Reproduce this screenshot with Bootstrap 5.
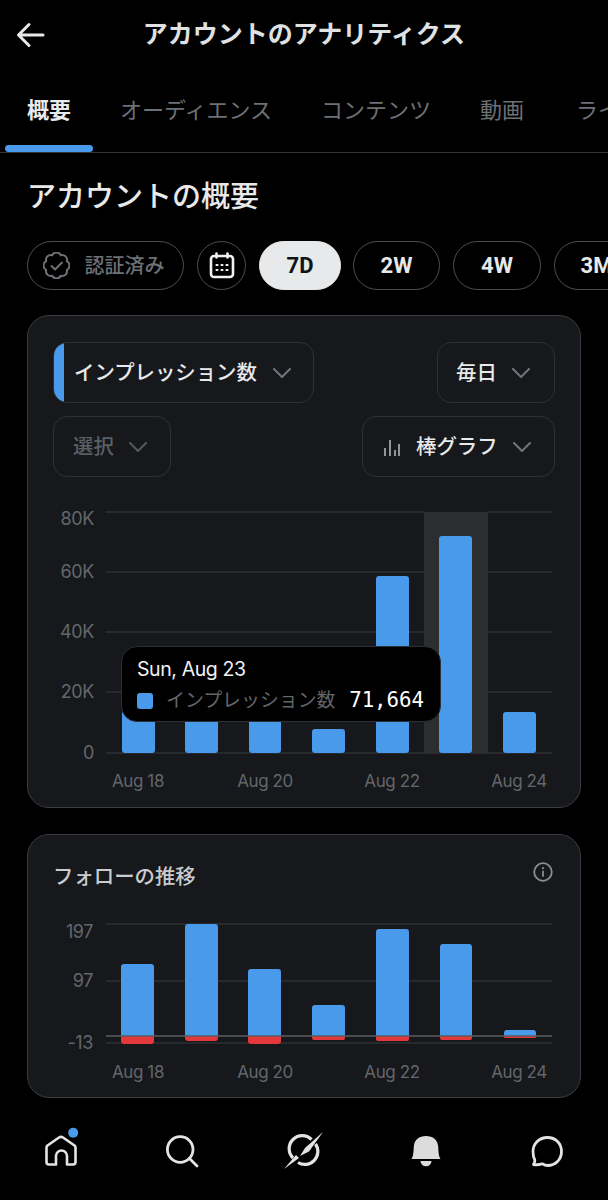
<!DOCTYPE html>
<html lang="ja">
<head>
  <meta charset="UTF-8">
  <title>アカウントのアナリティクス</title>
  <meta name="viewport" content="width=device-width, initial-scale=1.0">
  <link href="https://cdn.jsdelivr.net/npm/bootstrap@5.3.3/dist/css/bootstrap.min.css" rel="stylesheet" />
  <style>
    body { background: #000; color: #e7e9ea; height: 1200px; overflow: hidden; font-family: "Roboto", "Noto Sans CJK JP", sans-serif; }
    .top-bar { height: 68px; padding-top: 2px; display: grid; grid-template-columns: 1fr auto 1fr; align-items: center; }
    .top-bar svg { margin-left: 15px; }
    .top-title { font-size: 25px; font-weight: 700; color: #dfe1e3; }
    .tab-row { height: 85px; padding-left: 5px; gap: 5px; border-bottom: 1px solid #35373a; overflow: hidden; flex-wrap: nowrap; }
    .tab-item { position: relative; padding: 0 22px; font-size: 22px; color: #6d7175; white-space: nowrap; display: flex; align-items: center; height: 84px; }
    .tab-item.on { color: #e7e9ea; font-weight: 700; }
    .tab-item.on::after { content: ""; position: absolute; left: 0; right: 0; bottom: 0; height: 7px; border-radius: 4px; background: #4a9aeb; }
    .tab-item.last { margin-left: 3px; }
    .page-head { font-size: 29px; line-height: 40px; font-weight: 500; margin: 24px 0 0 27px; color: #e7e9ea; }
    .chip-row { margin: 24px 0 0 27px; gap: 13px; width: 640px; }
    .chip { height: 49px; border: 1.5px solid #4c4f53; color: #e7e9ea; font-size: 22px; font-weight: 700; padding: 0; display: flex; align-items: center; justify-content: center; flex: none; }
    .chip.verified { width: 157px; color: #6d7175; gap: 15px; font-size: 20px; font-weight: 500; padding-right: 4px; }
    .chip.cal { width: 49px; }
    .chip.d7 { width: 82px; background: #e7e9ea; border-color: #e7e9ea; color: #0f1419; }
    .chip.w2 { width: 87px; margin-left: -1px; }
    .chip.w4 { width: 88px; }
    .chip.m3 { width: 85px; }
    .panel { background: #16181c; border: 1.5px solid #3a3c41; border-radius: 22px; margin: 0 27px; position: relative; }
    .panel-main { margin-top: 25px; height: 493px; padding: 25.5px 25px 0; }
    .panel-follow { margin-top: 26px; height: 264px; padding: 27px 25px 0; }
    .pick { height: 61px; border: 1.5px solid #2e3035; border-radius: 14px; background: transparent; color: #e7e9ea; font-size: 20.4px; font-weight: 500; display: flex; align-items: center; padding: 2px 0 0; position: relative; overflow: hidden; }
    .pick-row2 { margin-top: 13px; }
    .pick.metric { width: 261px; padding-left: 20px; }
    .pick.metric::before { content: ""; position: absolute; left: 0; top: 0; bottom: 0; width: 10px; background: #4a9aeb; }
    .pick.daily { width: 118px; padding-left: 18px; }
    .pick.choose { width: 118px; padding-left: 19px; color: #5c5f64; }
    .pick.kind { width: 193px; padding-left: 21px; }
    .pick .chev { margin-left: 15px; }
    .pick.metric .chev { margin-left: 16px; }
    .plot { display: block; }
    .plot-main { margin-top: 23px; }
    .plot-follow { margin-top: 7.5px; }
    .plot text { font-size: 17px; fill: #63666b; font-family: "Inter", "Roboto", sans-serif; letter-spacing: -0.4px; }
    .plot .axis-y { font-size: 18px; text-anchor: end; }
    .plot .axis-x { text-anchor: middle; }
    .hover-tip { position: absolute; left: 93px; top: 330px; width: 320px; height: 76px; background: #000; border: 1.5px solid #2c2e32; border-radius: 16px; padding: 9px 16px 0 15px; }
    .tip-date { font-size: 19.5px; line-height: 26px; color: #f1f2f3; font-family: "Inter", "Roboto", sans-serif; letter-spacing: -0.4px; }
    .tip-line { margin-top: 6px; height: 26px; white-space: nowrap; }
    .tip-swatch { width: 16px; height: 16px; border-radius: 3px; background: #4a9aeb; flex: none; }
    .tip-name { font-size: 18.9px; color: #63666b; margin-left: 13px; }
    .tip-val { font-size: 20.8px; color: #fff; margin-left: auto; font-family: "DejaVu Sans Mono", "Liberation Mono", monospace; letter-spacing: -0.05px; }
    .panel-title { font-size: 20.4px; line-height: 30px; color: #c9cbce; height: 30px; font-weight: 500; }
    .info-mark { margin-right: 2px; }
    .bottom-nav { height: 102px; padding-top: 33px; }
    .bottom-nav .nav-cell { flex: 1 1 0; display: flex; justify-content: center; }
    .bottom-nav svg { overflow: visible; }
  </style>
</head>
<body>
  <div class="top-bar">
    <svg width="32" height="32" viewBox="0 0 32 32" fill="none" stroke="#e7e9ea" stroke-width="3" stroke-linecap="round" stroke-linejoin="round"><path d="M4 16h24M14 5.500 3.500 16 14 26.500"/></svg>
    <div class="top-title">アカウントのアナリティクス</div>
    <div></div>
  </div>

  <div class="nav tab-row">
    <div class="tab-item on">概要</div>
    <div class="tab-item">オーディエンス</div>
    <div class="tab-item">コンテンツ</div>
    <div class="tab-item">動画</div>
    <div class="tab-item last">ライブ</div>
  </div>

  <h2 class="page-head">アカウントの概要</h2>

  <div class="d-flex chip-row">
    <button class="btn rounded-pill chip verified">
      <svg width="27" height="27" viewBox="0 0 27 27" fill="none" stroke="#6d7175" stroke-width="2" stroke-linecap="round" stroke-linejoin="round"><path d="M17.800 3.200A4.800 4.800 0 0 1 23.800 9.200 4.800 4.800 0 0 1 23.800 17.800 4.800 4.800 0 0 1 17.800 23.800 4.800 4.800 0 0 1 9.200 23.800 4.800 4.800 0 0 1 3.200 17.800 4.800 4.800 0 0 1 3.200 9.200 4.800 4.800 0 0 1 9.200 3.200 4.800 4.800 0 0 1 17.800 3.200Z"/><path d="m8.500 14 3.500 3.500 7-7"/></svg>
      <span>認証済み</span>
    </button>
    <button class="btn rounded-pill chip cal">
      <svg width="26" height="27" viewBox="0 0 26 27" fill="none" stroke="#f1f2f3" stroke-width="2.600" stroke-linecap="round"><rect x="2" y="4" width="22" height="21" rx="3"/><path d="M7.500 1.500v4M18.500 1.500v4"/><path d="M7.500 13h1M12.500 13h1M17.500 13h1M7.500 18h1M12.500 18h1M17.500 18h1" stroke-width="2.200"/></svg>
    </button>
    <button class="btn rounded-pill chip d7">7D</button>
    <button class="btn rounded-pill chip w2">2W</button>
    <button class="btn rounded-pill chip w4">4W</button>
    <button class="btn rounded-pill chip m3">3M</button>
  </div>

  <div class="panel panel-main">
    <div class="d-flex justify-content-between">
      <button class="pick metric"><span>インプレッション数</span>
        <svg class="chev" width="18" height="10" viewBox="0 0 18 10" fill="none" stroke="#71767b" stroke-width="2" stroke-linecap="round" stroke-linejoin="round"><path d="m1 1 8 8 8-8"/></svg>
      </button>
      <button class="pick daily"><span>毎日</span>
        <svg class="chev" width="18" height="10" viewBox="0 0 18 10" fill="none" stroke="#71767b" stroke-width="2" stroke-linecap="round" stroke-linejoin="round"><path d="m1 1 8 8 8-8"/></svg>
      </button>
    </div>
    <div class="d-flex justify-content-between pick-row2">
      <button class="pick choose"><span>選択</span>
        <svg class="chev" width="18" height="10" viewBox="0 0 18 10" fill="none" stroke="#55585d" stroke-width="2" stroke-linecap="round" stroke-linejoin="round"><path d="m1 1 8 8 8-8"/></svg>
      </button>
      <button class="pick kind">
        <svg class="me-3" width="16" height="17" viewBox="0 0 16 17" fill="none" stroke="#c9cbce" stroke-width="1.400"><path d="M1 17V9M6 17V1M11 17v-6M15 17V5"/></svg>
        <span>棒グラフ</span>
        <svg class="chev" width="18" height="10" viewBox="0 0 18 10" fill="none" stroke="#71767b" stroke-width="2" stroke-linecap="round" stroke-linejoin="round"><path d="m1 1 8 8 8-8"/></svg>
      </button>
    </div>

    <svg class="plot plot-main" width="502" height="300" viewBox="53 500 502 300">
      <rect x="424" y="512" width="64" height="241" fill="#2c2d30"/>
      <g stroke="#2d2f33" stroke-width="1.500">
        <path d="M106 512H424M488 512H552M106 572H424M488 572H552M106 632H424M488 632H552M106 692H424M488 692H552M106 753H552"/>
      </g>
      <g fill="#4a9aeb">
        <rect x="122" y="690" width="33" height="63" rx="3"/>
        <rect x="185" y="690" width="33" height="63" rx="3"/>
        <rect x="249" y="690" width="32" height="63" rx="3"/>
        <rect x="312" y="729" width="33" height="24" rx="3"/>
        <rect x="376" y="576" width="33" height="177" rx="3"/>
        <rect x="439" y="536" width="33" height="217" rx="3"/>
        <rect x="503" y="712" width="33" height="41" rx="3"/>
      </g>
      <text class="axis-y" x="94" y="525">80K</text>
      <text class="axis-y" x="94" y="578">60K</text>
      <text class="axis-y" x="94" y="638">40K</text>
      <text class="axis-y" x="94" y="698">20K</text>
      <text class="axis-y" x="94" y="759">0</text>
      <text class="axis-x" x="138" y="787">Aug 18</text>
      <text class="axis-x" x="265" y="787">Aug 20</text>
      <text class="axis-x" x="392" y="787">Aug 22</text>
      <text class="axis-x" x="519" y="787">Aug 24</text>
    </svg>

    <div class="hover-tip">
      <div class="tip-date">Sun, Aug 23</div>
      <div class="d-flex align-items-center tip-line">
        <span class="tip-swatch"></span>
        <span class="tip-name">インプレッション数</span>
        <span class="tip-val">71,664</span>
      </div>
    </div>
  </div>

  <div class="panel panel-follow">
    <div class="d-flex justify-content-between">
      <div class="panel-title">フォローの推移</div>
      <svg class="info-mark" width="20" height="20" viewBox="0 0 20 20" fill="none" stroke="#8b8e92" stroke-width="1.800" stroke-linecap="round"><circle cx="10" cy="10" r="8.800"/><path d="M10 9.500v4.500"/><path d="M10 6v.2" stroke-width="2.200"/></svg>
    </div>
    <svg class="plot plot-follow" width="502" height="190" viewBox="53 900 502 190">
      <g stroke="#2d2f33" stroke-width="1.500">
        <path d="M106 924H552M106 981H552M106 1043H552"/>
      </g>
      <g fill="#4a9aeb">
        <path d="M121 1036V967a3 3 0 0 1 3-3h27a3 3 0 0 1 3 3v69z"/>
        <path d="M185 1036V927a3 3 0 0 1 3-3h27a3 3 0 0 1 3 3v109z"/>
        <path d="M248 1036V972a3 3 0 0 1 3-3h27a3 3 0 0 1 3 3v64z"/>
        <path d="M312 1036v-28a3 3 0 0 1 3-3h27a3 3 0 0 1 3 3v28z"/>
        <path d="M376 1036V932a3 3 0 0 1 3-3h27a3 3 0 0 1 3 3v104z"/>
        <path d="M440 1036V947a3 3 0 0 1 3-3h26a3 3 0 0 1 3 3v89z"/>
        <path d="M504 1036v-3a3 3 0 0 1 3-3h26a3 3 0 0 1 3 3v3z"/>
      </g>
      <g fill="#e5383b">
        <path d="M121 1036h33v5a3 3 0 0 1-3 3h-27a3 3 0 0 1-3-3z"/>
        <path d="M185 1036h33v2a3 3 0 0 1-3 3h-27a3 3 0 0 1-3-3z"/>
        <path d="M248 1036h33v5a3 3 0 0 1-3 3h-27a3 3 0 0 1-3-3z"/>
        <path d="M312 1036h33v2a2 2 0 0 1-2 2h-29a2 2 0 0 1-2-2z"/>
        <path d="M376 1036h33v3a2 2 0 0 1-2 2h-29a2 2 0 0 1-2-2z"/>
        <path d="M440 1036h32v2a2 2 0 0 1-2 2h-28a2 2 0 0 1-2-2z"/>
        <path d="M504 1036h32v1a1 1 0 0 1-1 1h-30a1 1 0 0 1-1-1z"/>
      </g>
      <path d="M106 1036H552" stroke="#5b5d61" stroke-width="1.600"/>
      <text class="axis-y" x="93" y="938">197</text>
      <text class="axis-y" x="93" y="987">97</text>
      <text class="axis-y" x="93" y="1049">-13</text>
      <text class="axis-x" x="138" y="1078">Aug 18</text>
      <text class="axis-x" x="265" y="1078">Aug 20</text>
      <text class="axis-x" x="392" y="1078">Aug 22</text>
      <text class="axis-x" x="519" y="1078">Aug 24</text>
    </svg>
  </div>

  <div class="d-flex bottom-nav">
    <div class="nav-cell">
      <svg width="40" height="40" viewBox="0 0 40 40" fill="none" stroke="#e3e4e5" stroke-width="2.600" stroke-linejoin="round"><path d="M5.500 16.500a2.500 2.500 0 0 1 1-2L18 6.500a3.500 3.500 0 0 1 4 0l11.500 8a2.500 2.500 0 0 1 1 2V31a2.500 2.500 0 0 1-2.500 2.500H26V25a5.500 5.500 0 0 0-11 0v8.500H8A2.500 2.500 0 0 1 5.500 31z"/><circle cx="32.200" cy="1.700" r="5" fill="#4a9aeb" stroke="none"/></svg>
    </div>
    <div class="nav-cell">
      <svg width="40" height="40" viewBox="0 0 40 40" fill="none" stroke="#e3e4e5" stroke-width="2.800" stroke-linecap="round"><circle cx="18.200" cy="18.500" r="12.800"/><path d="m27.500 27.500 7.500 7.500"/></svg>
    </div>
    <div class="nav-cell">
      <svg width="40" height="40" viewBox="0 0 40 40" fill="none" stroke="#e3e4e5" stroke-width="3.200"><path d="M27.500 8.500A13 13 0 0 0 9 27"/><path d="M14 31.500A13 13 0 0 0 31.500 13"/><path d="M39 1 25 20.500 16 25 21 17z" fill="#e3e4e5" stroke="none"/><path d="M0 38 12 24 15 27z" fill="#e3e4e5" stroke="none"/></svg>
    </div>
    <div class="nav-cell">
      <svg width="40" height="40" viewBox="0 0 40 40" fill="#dcdcdd"><path d="M5.500 28c1.500-2.500 2-5 2.300-12.500C8.300 9 13 5 20 5s11.700 4 12.200 10.500c.3 7.500.8 10 2.300 12.500z"/><path d="M14.500 30h11a5.500 5.200 0 0 1-11 0z"/></svg>
    </div>
    <div class="nav-cell">
      <svg width="40" height="40" viewBox="0 0 40 40" fill="none" stroke="#e3e4e5" stroke-width="2.800" stroke-linejoin="round"><path d="M20.500 6.500c8.200 0 14 6 14 14s-6 14-14 14c-2 0-3.600-.8-5.200-1.700-1.800.9-5 1.200-8.800.7 1-1.500 1.600-3 1.300-4.600C6.700 27 6 24 6 20.500c0-8 6.300-14 14.500-14z"/></svg>
    </div>
  </div>

  <script src="https://cdn.jsdelivr.net/npm/bootstrap@5.3.3/dist/js/bootstrap.bundle.min.js"></script>
</body>
</html>
